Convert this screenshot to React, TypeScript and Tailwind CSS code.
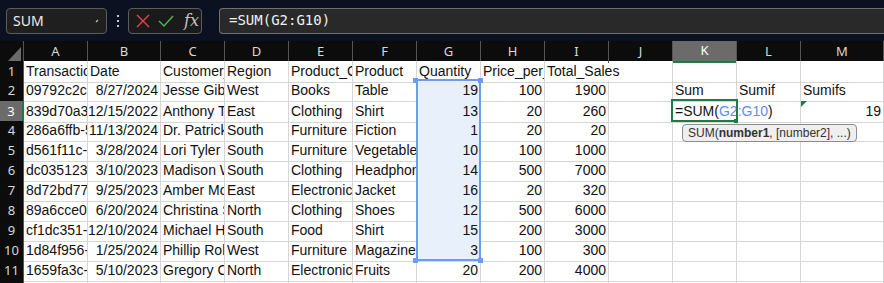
import React from 'react';

const COLS = ['A', 'B', 'C', 'D', 'E', 'F', 'G', 'H', 'I', 'J', 'K', 'L', 'M', 'N'];
const GRID =
  'grid grid-cols-[24px_64px_73px_64px_64px_64px_64px_64px_64px_64px_64px_64px_64px_1fr]';

// numbers and dates sit on the right, like in Excel
const isNum = (v: string) => /^[\d/]+$/.test(v);

const rows: string[][] = [
  ['Transaction_ID', 'Date', 'Customer_Name', 'Region', 'Product_Category', 'Product', 'Quantity', 'Price_per_Unit', 'Total_Sales', '', '', '', ''],
  ['09792c2c-1a4f', '8/27/2024', 'Jesse Gibbs', 'West', 'Books', 'Table', '19', '100', '1900', '', 'Sum', 'Sumif', 'Sumifs'],
  ['839d70a3-7bd2', '12/15/2022', 'Anthony Torres', 'East', 'Clothing', 'Shirt', '13', '20', '260', '', '', '', '19'],
  ['286a6ffb-5c1e', '11/13/2024', 'Dr. Patrick Lee', 'South', 'Furniture', 'Fiction', '1', '20', '20', '', '', '', ''],
  ['d561f11c-c0a3', '3/28/2024', 'Lori Tyler', 'South', 'Furniture', 'Vegetables', '10', '100', '1000', '', '', '', ''],
  ['dc035123-8e11', '3/10/2023', 'Madison Wood', 'South', 'Clothing', 'Headphones', '14', '500', '7000', '', '', '', ''],
  ['8d72bd77-4f0a', '9/25/2023', 'Amber Moore', 'East', 'Electronics', 'Jacket', '16', '20', '320', '', '', '', ''],
  ['89a6cce0-2d9b', '6/20/2024', 'Christina Smith', 'North', 'Clothing', 'Shoes', '12', '500', '6000', '', '', '', ''],
  ['cf1dc351-3a77', '12/10/2024', 'Michael Hill', 'South', 'Food', 'Shirt', '15', '200', '3000', '', '', '', ''],
  ['1d84f956-5e20', '1/25/2024', 'Phillip Rollins', 'West', 'Furniture', 'Magazines', '3', '100', '300', '', '', '', ''],
  ['1659fa3c-a8c4', '5/10/2023', 'Gregory Clark', 'North', 'Electronics', 'Fruits', '20', '200', '4000', '', '', '', ''],
  ['', '', '', '', '', '', '', '', '', '', '', '', ''],
];

function TopBar() {
  return (
    <div className="h-[41px] bg-[#0b1120] flex items-center font-['Noto_Sans',sans-serif]">
      <div className="ml-[6px] w-[101px] h-[26px] rounded-[4px] border border-[#5c5c5c] bg-[#1f1f1f] flex items-center pl-[6px] pr-[5px] text-[14px] text-[#ececec]">
        <span className="flex-1">SUM</span>
        <svg width="6" height="6" viewBox="0 0 6 6">
          <path d="M1 4 L3 2" stroke="#bbbbbb" strokeWidth="1.2" />
        </svg>
      </div>
      <div className="w-[21px] flex flex-col items-center gap-[3px]">
        <span className="w-[2px] h-[2px] bg-[#c8c8c8]" />
        <span className="w-[2px] h-[2px] bg-[#c8c8c8]" />
        <span className="w-[2px] h-[2px] bg-[#c8c8c8]" />
      </div>
      <div className="w-[74px] h-[26px] rounded-[4px] border border-[#5c5c5c] bg-[#1a1a1a] flex items-center pl-[7px] gap-[8px]">
        <svg width="14" height="14" viewBox="0 0 14 14">
          <path d="M1 1 L13 13 M13 1 L1 13" stroke="#e0454b" strokeWidth="1.4" />
        </svg>
        <svg width="16" height="12" viewBox="0 0 16 12">
          <path d="M1 6 L6 11 L15 1" stroke="#4fb55a" strokeWidth="1.4" fill="none" />
        </svg>
        <span className="ml-[2px] italic font-['DejaVu_Serif',serif] text-[16px] leading-none text-[#c4c4c4]">fx</span>
      </div>
      <div className="ml-[17px] flex-1 h-[26px] rounded-l-[4px] border-y border-l border-[#707070] bg-[#292929] flex items-center pl-[9px] font-['DejaVu_Sans_Mono',monospace] text-[14px] text-[#f0f0f0]">
        =SUM(G2:G10)
      </div>
    </div>
  );
}

function HeaderRow() {
  return (
    <div className={`${GRID} h-[20px] bg-[#0c0c0c] font-['Noto_Sans',sans-serif] text-[13px] text-[#d8d8d8]`}>
      <div className="relative border-r border-[#555]">
        <svg className="absolute right-[2px] bottom-[2px]" width="13" height="14" viewBox="0 0 13 14">
          <path d="M13 0 L13 14 L0 14 Z" fill="#6a6a6a" />
        </svg>
      </div>
      {COLS.map((c) =>
        c === 'K' ? (
          <div key={c} className="bg-[#6b6b6b] border-b-2 border-[#1f7a47] border-r border-r-[#555] flex items-center justify-center text-white">
            {c}
          </div>
        ) : (
          <div key={c} className="border-r border-[#555] flex items-center justify-center leading-none">
            {c}
          </div>
        )
      )}
    </div>
  );
}

function Row({ n, cells }: { n: number; cells: string[] }) {
  const active = n === 3;
  return (
    <div className={`${GRID} h-[20px] font-['Liberation_Sans',sans-serif] text-[14px] text-[#111]`}>
      <div
        className={`flex items-center justify-center font-['Noto_Sans',sans-serif] text-[13px] border-b border-[#2c2c2c] ${
          active ? 'bg-[#6b6b6b] text-white border-r-2 border-r-[#1f7a47]' : 'bg-[#0c0c0c] text-[#d8d8d8] border-r border-r-[#555]'
        }`}
      >
        {n}
      </div>
      {cells.map((v, i) => {
        const sel = i === 6 && n >= 2 && n <= 10;
        const overflow = (n === 1 && i === 8) || (n === 3 && i === 10);
        return (
          <div
            key={i}
            className={`border-b border-r flex items-center px-[2px] whitespace-nowrap ${
              sel ? 'bg-[#e8f0fc] border-[#d3dcea]' : 'border-[#d6d6d6]'
            } ${overflow ? 'overflow-visible border-r-transparent' : 'overflow-hidden'} ${
              isNum(v) ? 'justify-end' : ''
            }`}
          >
            {n === 3 && i === 10 ? (
              <span>
                =SUM(<span className="text-[#5b8ef0]">G2:G10</span>)
              </span>
            ) : (
              v
            )}
          </div>
        );
      })}
      <div className="border-b border-[#d6d6d6]" />
    </div>
  );
}

export default function App() {
  return (
    <div className="w-[884px] h-[283px] overflow-hidden bg-white">
      <TopBar />
      <HeaderRow />
      <div className="relative">
        {rows.map((r, i) => (
          <Row key={i} n={i + 1} cells={r} />
        ))}

        {/* selection G2:G10 */}
        <div className="absolute left-[416px] top-[18px] w-[65px] h-[182px] border-2 border-[#6b9cf2] pointer-events-none" />
        <div className="absolute left-[413px] top-[17px] w-[5px] h-[5px] bg-[#6b9cf2]" />
        <div className="absolute left-[478px] top-[17px] w-[5px] h-[5px] bg-[#6b9cf2]" />
        <div className="absolute left-[413px] top-[197px] w-[5px] h-[5px] bg-[#6b9cf2]" />
        <div className="absolute left-[478px] top-[197px] w-[5px] h-[5px] bg-[#6b9cf2]" />

        {/* active cell K3 */}
        <div className="absolute left-[671px] top-[38px] w-[67px] h-[23px] border-2 border-[#1f7a47]" />
        <div className="absolute left-[734px] top-[58px] w-[4px] h-[4px] bg-[#1f7a47]" />

        {/* error indicator M3 */}
        <svg className="absolute left-[801px] top-[40px]" width="6" height="6" viewBox="0 0 6 6">
          <path d="M0 0 L6 0 L0 6 Z" fill="#1f7a47" />
        </svg>

        {/* function tooltip */}
        <div className="absolute left-[682px] top-[63px] h-[18px] px-[5px] rounded-[4px] border border-[#8c8c8c] bg-[#efefef] flex items-center font-['Liberation_Sans',sans-serif] text-[12px] text-[#333] whitespace-nowrap">
          SUM(<b className="font-bold">number1</b>, [number2], ...)
        </div>
      </div>
    </div>
  );
}
